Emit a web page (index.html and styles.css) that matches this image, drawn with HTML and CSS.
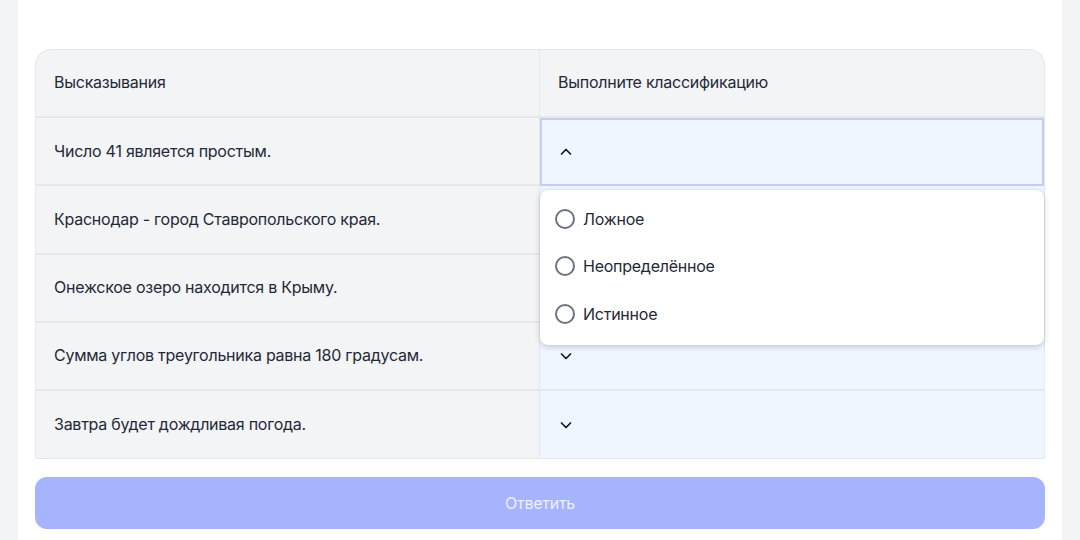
FILE: index.html
```html
<!DOCTYPE html>
<html lang="ru">
<head>
<meta charset="utf-8">
<title>Классификация</title>
<link rel="stylesheet" href="styles.css">
</head>
<body>
<div class="page">
  <div class="card">
    <div class="table">
      <div class="cell head left">Высказывания</div>
      <div class="cell head right">Выполните классификацию</div>

      <div class="cell left">Число 41 является простым.</div>
      <div class="cell select open">
        <svg class="chev" viewBox="0 0 12 12" width="12" height="12"><path d="M1.5 8 L6 3.5 L10.5 8" fill="none" stroke="#111827" stroke-width="1.7" stroke-linecap="round" stroke-linejoin="round"/></svg>
        <div class="menu">
          <div class="opt"><span class="radio"></span>Ложное</div>
          <div class="opt"><span class="radio"></span>Неопределённое</div>
          <div class="opt"><span class="radio"></span>Истинное</div>
        </div>
      </div>

      <div class="cell left">Краснодар - город Ставропольского края.</div>
      <div class="cell select">
        <svg class="chev" viewBox="0 0 12 12" width="12" height="12"><path d="M1.5 4 L6 8.5 L10.5 4" fill="none" stroke="#111827" stroke-width="1.7" stroke-linecap="round" stroke-linejoin="round"/></svg>
      </div>

      <div class="cell left">Онежское озеро находится в Крыму.</div>
      <div class="cell select">
        <svg class="chev" viewBox="0 0 12 12" width="12" height="12"><path d="M1.5 4 L6 8.5 L10.5 4" fill="none" stroke="#111827" stroke-width="1.7" stroke-linecap="round" stroke-linejoin="round"/></svg>
      </div>

      <div class="cell left">Сумма углов треугольника равна 180 градусам.</div>
      <div class="cell select">
        <svg class="chev" viewBox="0 0 12 12" width="12" height="12"><path d="M1.5 4 L6 8.5 L10.5 4" fill="none" stroke="#111827" stroke-width="1.7" stroke-linecap="round" stroke-linejoin="round"/></svg>
      </div>

      <div class="cell left last">Завтра будет дождливая погода.</div>
      <div class="cell select last">
        <svg class="chev" viewBox="0 0 12 12" width="12" height="12"><path d="M1.5 4 L6 8.5 L10.5 4" fill="none" stroke="#111827" stroke-width="1.7" stroke-linecap="round" stroke-linejoin="round"/></svg>
      </div>
    </div>
    <button class="submit" type="button">Ответить</button>
  </div>
</div>
</body>
</html>
```

FILE: styles.css
```css
* { box-sizing: border-box; }
html, body { margin: 0; height: 100%; }
body {
  background: #f3f4f6;
  font-family: Inter, "Noto Sans", "Liberation Sans", sans-serif;
  color: #1f2937;
  font-size: 16px;
  letter-spacing: -0.25px;
}
.page {
  padding: 0 18px;
  height: 100%;
}
.card {
  background: #ffffff;
  height: 100%;
  padding: 49px 17px 0;
}
.table {
  display: grid;
  grid-template-columns: 1fr 1fr;
  border: 1px solid #e5e7eb;
  border-bottom: none;
  border-radius: 16px 16px 0 0;
  background: #f3f4f6;
}
.cell {
  height: 68.25px;
  display: flex;
  align-items: center;
  padding: 0 18px 1px;
  border-bottom: 2px solid #e5e7eb;
  position: relative;
}
.cell.last { border-bottom: 1px solid #e5e7eb; }
.head { height: 68px; padding-bottom: 2px; }
.head.left { border-top-left-radius: 16px; }
.head.right { border-top-right-radius: 16px; }
.left { background: #f3f4f6; border-right: 1px solid #e5e7eb; }
.head.right { background: #f3f4f6; }
.select {
  background: #eff6ff;
  padding-left: 20px;
  padding-bottom: 0;
}
.select.open {
  border: 2px solid #c7cdf0;
}
.select.open .chev { margin-left: -2px; }
.chev { display: block; }
.menu {
  position: absolute;
  left: -2px;
  right: -2px;
  top: 70px;
  background: #ffffff;
  border-radius: 8px;
  box-shadow: 0 2px 6px rgba(0, 0, 0, 0.18), 0 0 1px rgba(0, 0, 0, 0.12);
  padding: 5px 0 7px;
  z-index: 5;
}
.opt {
  height: 47.5px;
  display: flex;
  align-items: center;
  padding-left: 15px;
  color: #1f2937;
}
.radio {
  width: 20px;
  height: 20px;
  border: 2px solid #6b7280;
  border-radius: 50%;
  margin-right: 8px;
  flex: none;
}
.submit {
  display: block;
  width: 100%;
  height: 52px;
  margin-top: 18px;
  border: none;
  border-radius: 12px;
  background: #a5b4fc;
  color: #eef0ff;
  font-family: Inter, "Noto Sans", "Liberation Sans", sans-serif;
  font-size: 16px;
  letter-spacing: -0.25px;
}
```
